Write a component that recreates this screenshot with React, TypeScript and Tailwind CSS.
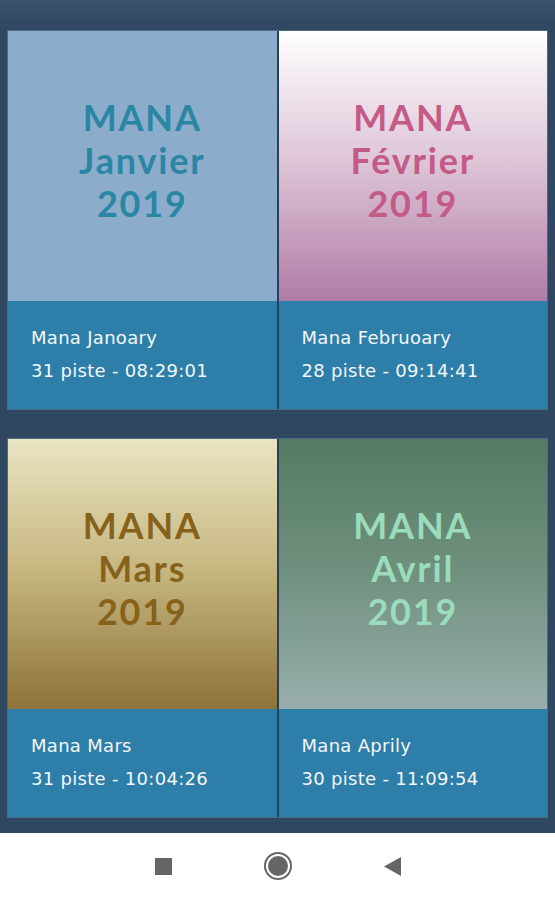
const albums = [
  {
    month: "Janvier",
    name: "Mana Janoary",
    info: "31 piste - 08:29:01",
    cover: "bg-[#8badcb]",
    text: "text-[#2a86a3]",
  },
  {
    month: "Février",
    name: "Mana Februoary",
    info: "28 piste - 09:14:41",
    cover: "bg-gradient-to-b from-[#ffffff] via-[#dcc3d6] to-[#b17ca6]",
    text: "text-[#c45a86]",
  },
  {
    month: "Mars",
    name: "Mana Mars",
    info: "31 piste - 10:04:26",
    cover: "bg-gradient-to-b from-[#e9e5c2] via-[#c6b57e] to-[#8c7339]",
    text: "text-[#86621a]",
  },
  {
    month: "Avril",
    name: "Mana Aprily",
    info: "30 piste - 11:09:54",
    cover: "bg-gradient-to-b from-[#557a63] via-[#70917f] to-[#9aafad]",
    text: "text-[#9bdcbc]",
  },
];

function AlbumCard({ month, name, info, cover, text }: (typeof albums)[number]) {
  return (
    <div className="flex flex-col">
      <div className={`flex h-[270px] items-center justify-center pb-[12px] ${cover}`}>
        <div
          className={`text-center text-[36px] font-bold leading-[43px] tracking-[1.8px] ${text}`}
          style={{ fontFamily: "Lato, 'Open Sans', sans-serif" }}
        >
          <div>MANA</div>
          <div>{month}</div>
          <div>2019</div>
        </div>
      </div>
      <div
        className="flex h-[108px] flex-col justify-center gap-[10px] bg-[#2d7ea8] pl-[23px] pb-[2px] text-[18px] leading-[23px] tracking-[0.3px] text-[#f4f8fb]"
        style={{ fontFamily: "'DejaVu Sans', Lato, sans-serif" }}
      >
        <div>{name}</div>
        <div>{info}</div>
      </div>
    </div>
  );
}

export default function App() {
  return (
    <div className="flex h-[900px] w-[555px] flex-col bg-[#2f4760]">
      <div className="h-[30px] bg-gradient-to-b from-[#3a536b] to-[#2f4760]" />
      <div className="flex flex-1 flex-col gap-[28px] px-[7px]">
        {[0, 2].map((row) => (
          <div key={row} className="grid grid-cols-2 gap-[2px] border border-[#4a6a86] bg-[#294158]">
            <AlbumCard {...albums[row]} />
            <AlbumCard {...albums[row + 1]} />
          </div>
        ))}
      </div>
      <div className="flex h-[67px] items-center justify-center gap-[92px] bg-white pb-[1px]">
        <div className="h-[17px] w-[17px] bg-[#666666]" />
        <div className="flex h-[28px] w-[28px] items-center justify-center rounded-full border-2 border-[#666666]">
          <div className="h-[20px] w-[20px] rounded-full bg-[#666666]" />
        </div>
        <svg width="17" height="19" viewBox="0 0 17 19">
          <path d="M17 0 L0 9.5 L17 19 Z" fill="#666666" />
        </svg>
      </div>
    </div>
  );
}
